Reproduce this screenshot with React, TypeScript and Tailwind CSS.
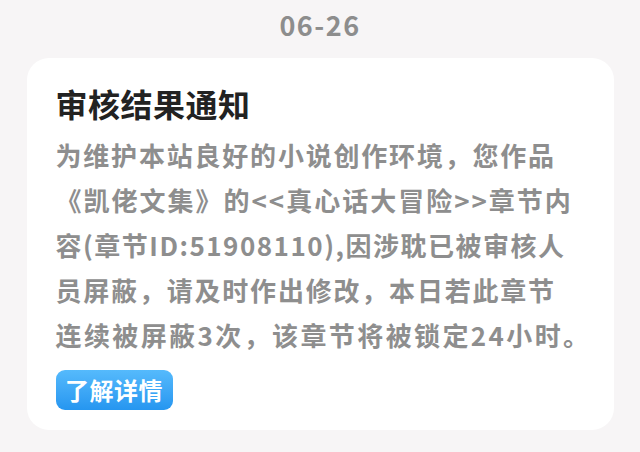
import React from "react";

const lines: { t: string; cls: string }[] = [
  { t: "为维护本站良好的小说创作环境，您作品", cls: "tracking-[1.8px]" },
  { t: "《凯佬文集》的<<真心话大冒险>>章节内", cls: "tracking-[2px]" },
  { t: "容(章节ID:51908110),因涉耽已被审核人", cls: "tracking-[1.5px]" },
  { t: "员屏蔽，请及时作出修改，本日若此章节", cls: "tracking-[1.8px]" },
  { t: "连续被屏蔽3次，该章节将被锁定24小时。", cls: "tracking-[2.4px]" },
];

export default function App() {
  return (
    <div
      className="w-[640px] h-[452px] bg-[#f7f5f6] flex flex-col items-center overflow-hidden"
      style={{ fontFamily: '"Noto Sans CJK SC", "Noto Sans", sans-serif' }}
    >
      <div className="pt-[10px] h-[40px] text-[27px] leading-[30px] font-bold text-[#8d8d8d] tracking-[1.5px]">
        06-26
      </div>
      <div className="mt-[18px] w-[587px] h-[372px] bg-white rounded-[22px] pl-[29px] pt-[25px] flex flex-col items-start">
        <div className="text-[32px] leading-[40px] font-bold text-[#222222] tracking-[0.5px]">
          审核结果通知
        </div>
        <div className="mt-[9px] text-[26px] leading-[45px] font-bold text-[#8e8e8e]">
          {lines.map((l) => (
            <div key={l.t} className={`whitespace-nowrap ${l.cls}`}>
              {l.t}
            </div>
          ))}
        </div>
        <button className="mt-[13px] w-[117px] h-[40px] rounded-[9px] bg-gradient-to-b from-[#55bafc] to-[#2596f0] text-white text-[24px] leading-[40px] font-bold tracking-[0.5px]">
          了解详情
        </button>
      </div>
    </div>
  );
}
